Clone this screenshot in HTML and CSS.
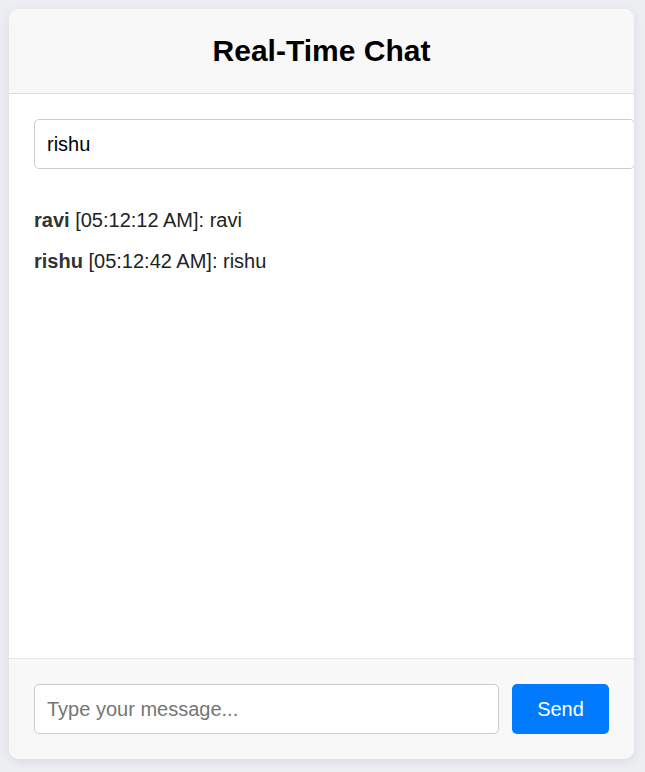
FILE: index.html
```html
<!DOCTYPE html>
<html lang="en">
<head>
<meta charset="utf-8">
<title>Real-Time Chat</title>
<link rel="stylesheet" href="styles.css">
</head>
<body>
<div class="chat">
  <header class="chat-header">
    <h1 class="chat-title">Real-Time Chat</h1>
  </header>
  <main class="chat-main">
    <input class="username" type="text" value="rishu">
    <div class="messages">
      <div class="message"><strong>ravi</strong> [05:12:12 AM]: ravi</div>
      <div class="message"><strong>rishu</strong> [05:12:42 AM]: rishu</div>
    </div>
  </main>
  <footer class="chat-footer">
    <input class="msg-input" type="text" placeholder="Type your message...">
    <button class="send-btn" type="button">Send</button>
  </footer>
</div>
</body>
</html>
```
FILE: styles.css
```css
html, body {
  margin: 0;
  padding: 0;
}
body {
  background: #eceef2;
  font-family: "Liberation Sans", Arial, sans-serif;
}
.chat {
  margin: 9px;
  width: 625px;
  height: 750px;
  background: #fff;
  border-radius: 10px;
  overflow: hidden;
  box-shadow: 0 3px 12px rgba(0, 0, 0, 0.08);
  display: flex;
  flex-direction: column;
}
.chat-header {
  background: #f8f8f8;
  border-bottom: 1px solid #dddddd;
  height: 84px;
  display: flex;
  align-items: center;
  justify-content: center;
  flex: none;
}
.chat-title {
  margin: 0;
  font-size: 30px;
  font-weight: bold;
  color: #000;
  line-height: 34px;
}
.chat-main {
  flex: 1;
  padding: 25px 25px 0 25px;
  min-height: 0;
}
.username {
  display: block;
  width: 100%;
  height: 48px;
  padding: 0 12px;
  margin: 0;
  border: 1px solid #cccccc;
  border-radius: 5px;
  font-family: "Liberation Sans", Arial, sans-serif;
  font-size: 20px;
  color: #000;
  background: #fff;
  outline: none;
}
.messages {
  padding-top: 40px;
  display: flex;
  flex-direction: column;
  gap: 18px;
}
.message {
  font-size: 20px;
  line-height: 23px;
  color: #222;
}
.message strong {
  font-weight: bold;
  color: #333;
}
.chat-footer {
  flex: none;
  background: #f8f8f8;
  border-top: 1px solid #e6e6e6;
  padding: 25px;
  display: flex;
  gap: 13px;
}
.msg-input {
  flex: 1;
  min-width: 0;
  height: 50px;
  box-sizing: border-box;
  padding: 0 12px;
  margin: 0;
  border: 1px solid #cccccc;
  border-radius: 5px;
  font-family: "Liberation Sans", Arial, sans-serif;
  font-size: 20px;
  background: #fff;
  outline: none;
}
.msg-input::placeholder {
  color: #757575;
}
.send-btn {
  flex: none;
  width: 97px;
  height: 50px;
  border: none;
  border-radius: 5px;
  background: #007bff;
  color: #fff;
  font-family: "Liberation Sans", Arial, sans-serif;
  font-size: 20px;
  padding: 0;
  cursor: pointer;
}
```
